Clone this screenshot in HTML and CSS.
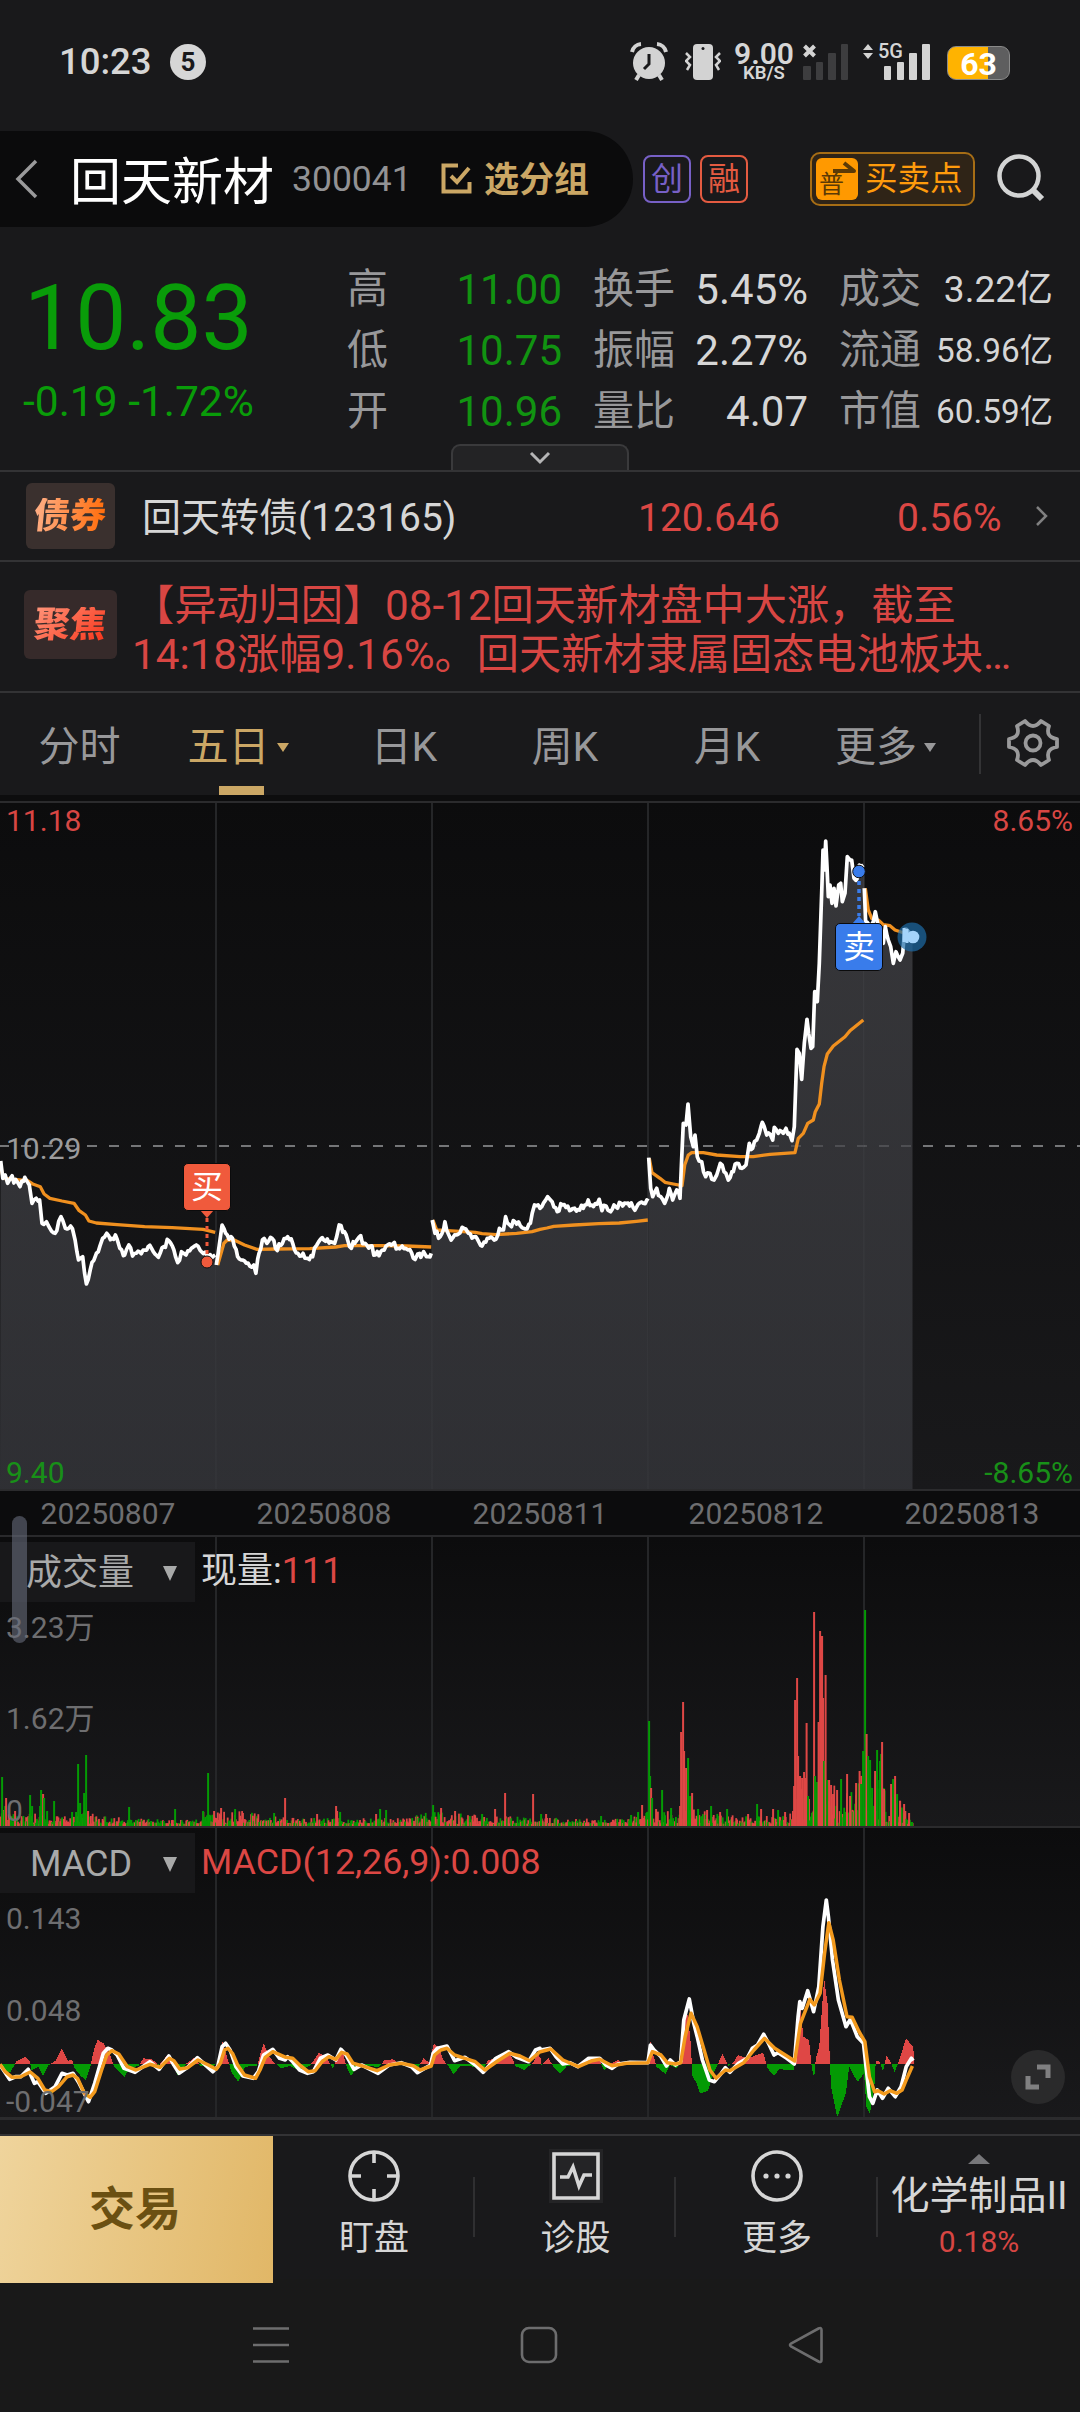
FILE: index.html
```html
<!DOCTYPE html>
<html lang="zh-CN">
<head>
    <meta charset="UTF-8">
    <meta name="viewport" content="width=device-width, initial-scale=1.0">
    <title>回天新材 300041</title>
    <link rel="stylesheet" href="styles.css">
</head>
<body>
    <div class="status-bar">
        <span class="clock">10:23</span>
        <span class="notice">5</span>
        <div class="status-icons">
            <svg class="icon-alarm" width="38" height="40" viewBox="0 0 38 40">
                <circle cx="19" cy="21" r="16"/>
                <path d="M2 10a10 10 0 0 1 9-8M27 2a10 10 0 0 1 9 8" class="thick"/>
                <path d="M9 33l-3 5M29 33l3 5" class="thick"/>
                <path d="M19 12v10l-5 5" class="cut"/>
            </svg>
            <svg class="icon-vibrate" width="36" height="38" viewBox="0 0 36 38">
                <rect x="8" y="1" width="20" height="36" rx="4"/>
                <circle cx="18" cy="5.500" r="1.500" fill="#19191b"/>
                <path d="M1 10l4 4-4 4 4 4-3 5M35 10l-4 4 4 4-4 4 3 5" class="thin"/>
            </svg>
            <div class="speed"><b>9.00</b><small>KB/S</small></div>
            <svg class="icon-signal-off" width="46" height="38" viewBox="0 0 46 38">
                <path d="M1.500 3l10 10M11.500 3l-10 10" class="thick"/>
                <g fill="#3d3d3f"><rect y="23" width="8" height="14" rx="1"/><rect x="13" y="19" width="7" height="18" rx="1"/><rect x="25" y="10" width="8" height="27" rx="1"/><rect x="38" y="1" width="7" height="36" rx="1"/></g>
            </svg>
            <div class="signal">
                <svg width="68" height="38" viewBox="0 0 68 38">
                    <path d="M0 7l5-6 5 6zM0 10l5 6 5-6z"/>
                    <rect x="21" y="23" width="7" height="14" rx="1"/><rect x="34" y="19" width="7" height="18" rx="1"/><rect x="46" y="10" width="8" height="27" rx="1"/><rect x="59" y="1" width="8" height="36" rx="1"/>
                </svg>
                <b>5G</b>
            </div>
            <div class="battery">63</div>
        </div>
    </div>

    <div class="header">
        <div class="title-pill">
            <svg width="24" height="40" viewBox="0 0 24 40"><path d="M22 2L4 20l18 18" fill="none" stroke="#9a9a9b" stroke-width="3.500"/></svg>
            <h1>回天新材</h1>
            <span class="code">300041</span>
            <svg class="icon-check" width="32" height="32" viewBox="0 0 32 32"><path d="M17 2.500H2.500v26h26V19M10 13l6 6L28 5" fill="none" stroke="#cba765" stroke-width="4"/></svg>
            <span class="group">选分组</span>
        </div>
        <span class="tag tag-purple">创</span>
        <span class="tag tag-red">融</span>
        <div class="trade-points">
            <div class="trade-icon">普<svg width="24" height="12" viewBox="0 0 24 12"><path d="M1 10h21L12 2" fill="none" stroke="#5b3a06" stroke-width="4" stroke-linejoin="round"/></svg></div>
            <span>买卖点</span>
        </div>
        <svg class="icon-search" width="50" height="50" viewBox="0 0 50 50"><circle cx="22" cy="22" r="19.500" fill="none" stroke="#d3d4d4" stroke-width="4.500"/><path d="M35 35l10 10" stroke="#d3d4d4" stroke-width="6"/></svg>
    </div>

    <div class="quote">
        <div class="price">
            <div class="last">10.83</div>
            <div class="change">-0.19 -1.72%</div>
        </div>
        <dl class="stats stats-a">
            <dt>高</dt><dd>11.00</dd>
            <dt>低</dt><dd>10.75</dd>
            <dt>开</dt><dd>10.96</dd>
        </dl>
        <dl class="stats stats-b">
            <dt>换手</dt><dd>5.45%</dd>
            <dt>振幅</dt><dd>2.27%</dd>
            <dt>量比</dt><dd>4.07</dd>
        </dl>
        <dl class="stats stats-c">
            <dt>成交</dt><dd class="wide">3.22亿</dd>
            <dt>流通</dt><dd>58.96亿</dd>
            <dt>市值</dt><dd>60.59亿</dd>
        </dl>
        <div class="expand"><svg width="24" height="14" viewBox="0 0 24 14"><path d="M3 2l9 9 9-9" fill="none" stroke="#b5b5b6" stroke-width="3"/></svg></div>
    </div>

    <div class="bond">
        <span class="badge badge-bond"><i>债券</i></span>
        <span class="bond-name">回天转债(123165)</span>
        <span class="bond-price">120.646</span>
        <span class="bond-change">0.56%</span>
        <svg width="14" height="22" viewBox="0 0 14 22"><path d="M2 2l9 9-9 9" fill="none" stroke="#808081" stroke-width="2.500"/></svg>
    </div>

    <div class="focus">
        <span class="badge badge-focus"><i>聚焦</i></span>
        <p>【异动归因】08-12回天新材盘中大涨，截至<br>14:18涨幅9.16%。回天新材隶属固态电池板块…</p>
    </div>

    <div class="tabs">
        <span class="tab">分时</span>
        <span class="tab active">五日<em></em></span>
        <span class="tab">日K</span>
        <span class="tab">周K</span>
        <span class="tab">月K</span>
        <span class="tab more">更多<em></em></span>
        <div class="settings">
            <svg width="52" height="52" viewBox="0 0 52 52" fill="none" stroke="#9a9a9b" stroke-width="3.800" stroke-linejoin="round">
                <path d="M18 4Q26 14 34 4L42 9Q38 20 50 22V30Q38 32 42 43L34 48Q26 38 18 48L10 43Q14 32 2 30V22Q14 20 10 9Z"/>
                <circle cx="26" cy="26" r="7.500"/>
            </svg>
        </div>
    </div>

    <div class="panel price-panel">
        <svg id="price-chart" width="1080" height="690" viewBox="0 0 1080 690"></svg>
        <span class="label red top left">11.18</span>
        <span class="label red top right">8.65%</span>
        <span class="label mid left">10.29</span>
        <span class="label green bottom left">9.40</span>
        <span class="label green bottom right">-8.65%</span>
        <span class="marker buy">买</span>
        <span class="marker sell">卖</span>
    </div>

    <div class="dates">
        <span>20250807</span><span>20250808</span><span>20250811</span><span>20250812</span><span>20250813</span>
    </div>

    <div class="panel volume-panel">
        <svg id="volume-chart" width="1080" height="291" viewBox="0 0 1080 291"></svg>
        <div class="panel-head">
            <div class="select"><span>成交量</span><em></em></div>
            <div class="reading">现量:<span class="red">111</span></div>
        </div>
        <span class="label v1 left">3.23万</span>
        <span class="label v2 left">1.62万</span>
        <span class="label v3 left">0</span>
    </div>

    <div class="panel macd-panel">
        <svg id="macd-chart" width="1080" height="292" viewBox="0 0 1080 292"></svg>
        <div class="panel-head">
            <div class="select"><span>MACD</span><em></em></div>
            <div class="reading red">MACD(12,26,9):0.008</div>
        </div>
        <span class="label m1 left">0.143</span>
        <span class="label m2 left">0.048</span>
        <span class="label m3 left">-0.047</span>
        <div class="zoom-btn"><svg width="26" height="26" viewBox="0 0 26 26"><path d="M12 3h11v11M3 12v11h11" fill="none" stroke="#808081" stroke-width="5"/></svg></div>
    </div>

    <div class="side-handle"></div>

    <div class="toolbar">
        <div class="trade">交易</div>
        <div class="tool">
            <svg width="54" height="54" viewBox="0 0 54 54" fill="none" stroke="#d6d6d6" stroke-width="3.600"><circle cx="27" cy="27" r="24"/><path d="M27 3v11M27 40v11M3 27h11M40 27h11"/></svg>
            <span>盯盘</span>
        </div>
        <div class="tool">
            <svg width="54" height="54" viewBox="0 0 54 54" fill="none" stroke="#d6d6d6" stroke-width="3.600"><path d="M0 0h54v54H0z" fill="#242426" stroke="none"/><path d="M5 5h44v44H5z"/><path d="M11 28h8l5-10 6 19 5-11h8"/></svg>
            <span>诊股</span>
        </div>
        <div class="tool">
            <svg width="54" height="54" viewBox="0 0 54 54" fill="none" stroke="#d6d6d6" stroke-width="3.600"><circle cx="27" cy="27" r="24"/><g fill="#d6d6d6" stroke="none"><circle cx="16" cy="27" r="2.600"/><circle cx="27" cy="27" r="2.600"/><circle cx="38" cy="27" r="2.600"/></g></svg>
            <span>更多</span>
        </div>
        <div class="sector">
            <em></em>
            <span>化学制品II</span>
            <b>0.18%</b>
        </div>
    </div>

    <div class="sys-nav">
        <svg width="38" height="38" viewBox="0 0 38 38"><path d="M1 2.500h36M1 19h36M1 35.500h36"/></svg>
        <svg width="38" height="38" viewBox="0 0 38 38"><rect x="2" y="2" width="34" height="34" rx="7"/></svg>
        <svg width="38" height="38" viewBox="0 0 38 38"><path d="M33.500 4v30q0 3-3 1.500L3 20.500q-2-1.500 0-3L30.500 2.500q3-1.500 3 1.500z"/></svg>
    </div>

    <script src="script.js"></script>
</body>
</html>
```

FILE: styles.css
```css
* {
    margin: 0;
    padding: 0;
    box-sizing: border-box;
}

body {
    position: relative;
    width: 1080px;
    height: 2412px;
    overflow: hidden;
    font-family: Roboto, 'Noto Sans CJK SC', sans-serif;
    background-color: #19191b;
    color: #d6d6d6;
    line-height: 1;
}

svg {
    display: block;
    flex: none;
}

i, em {
    font-style: normal;
}

.red {
    color: #dc4744;
}

/* status bar */
.status-bar {
    display: flex;
    align-items: center;
    height: 124px;
    padding-left: 59px;
}

.clock {
    width: 111px;
    font-size: 36.5px;
    font-weight: 500;
}

.notice {
    width: 36px;
    height: 36px;
    border-radius: 50%;
    background-color: #d6d6d6;
    color: #19191b;
    font-size: 26px;
    font-weight: 700;
    line-height: 37px;
    text-align: center;
}

.status-icons {
    display: flex;
    align-items: center;
    margin-left: 424px;
    fill: #d3d3d3;
}

.status-icons .thick,
.status-icons .thin,
.status-icons .cut {
    fill: none;
    stroke: #d3d3d3;
    stroke-width: 4;
}

.status-icons .thin {
    stroke-width: 2.5px;
}

.status-icons .cut {
    stroke: #19191b;
    stroke-width: 3px;
}

.icon-vibrate {
    margin-left: 17px;
}

.speed {
    display: flex;
    flex-direction: column;
    align-items: center;
    width: 60px;
    margin-left: 13px;
}

.speed b {
    font-size: 30px;
    line-height: 22px;
    font-weight: 600;
}

.speed small {
    font-size: 18.5px;
    line-height: 17px;
    font-weight: 600;
}

.icon-signal-off {
    margin-left: 9px;
}

.signal {
    position: relative;
    margin-left: 14px;
}

.signal b {
    position: absolute;
    left: 15px;
    top: 0;
    font-size: 20px;
    line-height: 17px;
    font-weight: 500;
}

.battery {
    width: 63px;
    height: 34px;
    margin: 2px 0 0 16px;
    border: 1px solid #8a8a8a;
    border-radius: 9px;
    background: linear-gradient(90deg, #ffb300 66%, #5e5e5f 66%);
    color: #fff;
    font-size: 32px;
    font-weight: 700;
    line-height: 34px;
    text-align: center;
}

/* header */
.header {
    display: flex;
    align-items: center;
    height: 110px;
}

.title-pill {
    display: flex;
    align-items: center;
    width: 633px;
    height: 96px;
    margin-right: 10px;
    padding-left: 14px;
    border-radius: 0 48px 48px 0;
    background-color: #0b0b0c;
}

.title-pill h1 {
    width: 222px;
    margin-left: 32px;
    padding-top: 6px;
    font-size: 51px;
    font-weight: 400;
    color: #fff;
}

.code {
    width: 149px;
    padding-top: 2px;
    font-size: 35.5px;
    color: #929294;
}

.group {
    margin-left: 11px;
    padding-top: 3px;
    font-size: 35px;
    font-weight: 700;
    color: #cba765;
}

.tag {
    width: 48px;
    height: 48px;
    margin-right: 9px;
    border: 2px solid;
    border-radius: 8px;
    font-size: 32px;
    line-height: 44px;
    text-align: center;
}

.tag-purple {
    color: #7760c6;
}

.tag-red {
    color: #e45b41;
}

.trade-points {
    display: flex;
    align-items: center;
    width: 165px;
    height: 54px;
    margin-left: 53px;
    padding-left: 4px;
    border: 2px solid #a66d15;
    border-radius: 10px;
    background-color: #2f2417;
    color: #ff9b0c;
    font-size: 32.5px;
}

.trade-icon {
    position: relative;
    width: 42px;
    height: 42px;
    margin-right: 7px;
    padding: 15px 0 0 3px;
    border-radius: 6px;
    background-color: #ff9900;
    color: #5b3a06;
    font-size: 25px;
    line-height: 24px;
}

.trade-icon svg {
    position: absolute;
    right: 2px;
    top: 3px;
}

.icon-search {
    margin-left: 22px;
}

/* quote */
.quote {
    position: relative;
    display: flex;
    height: 238px;
    padding-top: 25px;
    border-bottom: 2px solid #333335;
}

.price {
    width: 347px;
    color: #099c09;
}

.last {
    padding: 14px 0 0 24px;
    font-size: 91px;
    line-height: 90px;
}

.change {
    margin-top: 15px;
    padding-left: 23px;
    font-size: 42.5px;
    line-height: 48px;
    white-space: nowrap;
}

.stats {
    display: grid;
    grid-template-columns: auto auto;
    grid-auto-rows: 61px;
    justify-content: space-between;
    align-content: start;
    line-height: 61px;
    white-space: nowrap;
}

.stats dt {
    font-size: 41px;
    color: #98989a;
}

.stats dd {
    font-size: 42px;
    text-align: right;
}

.stats-a {
    width: 215px;
}

.stats-a dd {
    color: #119311;
}

.stats-b {
    width: 215px;
    margin-left: 31px;
}

.stats-c {
    width: 214px;
    margin-left: 31px;
}

.stats-c dd {
    font-size: 33.3px;
}

.stats-c dd.wide {
    font-size: 37px;
}

.expand {
    position: absolute;
    left: 451px;
    bottom: 0;
    display: flex;
    align-items: center;
    justify-content: center;
    width: 178px;
    height: 26px;
    border: 2px solid #3a3a3c;
    border-bottom: 0;
    border-radius: 9px 9px 0 0;
    background-color: #232325;
}

/* bond and focus rows */
.badge {
    display: flex;
    align-items: center;
    justify-content: center;
    flex: none;
    border-radius: 6px;
}

.badge i {
    font-size: 36px;
    font-weight: 900;
    transform: skewX(-6deg);
    background-clip: text;
    -webkit-background-clip: text;
    color: transparent;
}

.badge-bond {
    width: 89px;
    height: 66px;
    background-color: #3a302e;
}

.badge-bond i {
    background-image: linear-gradient(90deg, #ffae85, #ff6c0a);
}

.badge-focus {
    width: 93px;
    height: 69px;
    margin-top: 28px;
    background-color: #362a2a;
}

.badge-focus i {
    background-image: linear-gradient(135deg, #ff9479, #f8341a);
}

.bond {
    display: flex;
    align-items: center;
    height: 90px;
    padding-left: 26px;
    border-bottom: 2px solid #333335;
    font-size: 39px;
}

.bond > span:not(.badge) {
    padding-top: 5px;
}

.bond-name {
    width: 496px;
    margin-left: 27px;
}

.bond-price {
    width: 259px;
    color: #dc4744;
}

.bond-change {
    width: 138px;
    color: #dc4744;
}

.focus {
    display: flex;
    height: 131px;
    padding-left: 24px;
    border-bottom: 2px solid #333335;
}

.focus p {
    margin: 20px 0 0 15px;
    font-size: 42.2px;
    line-height: 48.7px;
    white-space: nowrap;
    color: #d84643;
}

/* tabs */
.tabs {
    display: grid;
    grid-template-columns: 159px 158px 174px 148px 176px 164px 101px;
    height: 108px;
    border-bottom: 6px solid #0d0d0e;
}

.tab {
    position: relative;
    display: flex;
    align-items: center;
    justify-content: center;
    padding-top: 6px;
    font-size: 41px;
    color: #98989a;
}

.tab em {
    margin-left: 7px;
    border: 6px solid transparent;
    border-top: 9px solid #98989a;
    border-bottom: 0;
}

.tab.active {
    color: #cba765;
}

.tab.active em {
    border-top-color: #cba765;
}

.tab.active::after {
    content: '';
    position: absolute;
    left: 60px;
    bottom: 0;
    width: 45px;
    height: 9px;
    background-color: #cba765;
}

.tab.more {
    padding-right: 23px;
}

.settings {
    height: 60px;
    margin-top: 21px;
    padding: 3px 0 0 26px;
    border-left: 2px solid #333335;
}

/* chart panels */
.panel {
    position: relative;
}

.price-panel {
    height: 690px;
}

.label {
    position: absolute;
    font-size: 30px;
    line-height: 36px;
    color: #6e6e70;
}

.label.left {
    left: 6px;
}

.label.right {
    right: 7px;
}

.label.red {
    color: #d84643;
}

.label.green {
    color: #189018;
}

.label.top {
    top: 2px;
}

.label.mid {
    top: 330px;
    color: #9b9b9c;
}

.label.bottom {
    bottom: 0;
}

.marker {
    position: absolute;
    width: 48px;
    height: 48px;
    border: 1px solid #0b0b0c;
    border-radius: 5px;
    color: #fff;
    font-size: 32px;
    line-height: 46px;
    text-align: center;
}

.marker.buy {
    left: 183px;
    top: 362px;
    background-color: #f05a3c;
}

.marker.sell {
    left: 835px;
    top: 122px;
    background-color: #397ceb;
}

.dates {
    display: grid;
    grid-template-columns: repeat(5, 216px);
    height: 46px;
    border-bottom: 2px solid #29292b;
    background-color: #0c0c0d;
    color: #6e6e70;
    font-size: 30px;
    line-height: 46px;
    text-align: center;
}

.volume-panel {
    height: 291px;
}

.macd-panel {
    height: 292px;
}

.panel-head {
    position: absolute;
    left: 0;
    top: 5px;
    display: flex;
    gap: 6px;
    height: 60px;
    font-size: 36px;
    line-height: 60px;
}

.reading {
    line-height: 59px;
}

.select {
    display: flex;
    align-items: center;
    justify-content: space-between;
    width: 195px;
    padding: 2px 18px 0 26px;
    background-color: #18181a;
    color: #a8a9a9;
}

.macd-panel .select {
    padding-left: 30px;
}

.macd-panel .reading {
    font-size: 35.8px;
    line-height: 58px;
}

.select em {
    border: 7.5px solid transparent;
    border-top: 15px solid #a8a9a9;
    border-bottom: 0;
}

.label.v1 {
    top: 73px;
}

.label.v2 {
    top: 164px;
}

.label.v3 {
    top: 256px;
}

.label.m1 {
    top: 73px;
}

.label.m2 {
    top: 165px;
}

.label.m3 {
    top: 256px;
}

.zoom-btn {
    position: absolute;
    left: 1011px;
    top: 222px;
    display: flex;
    align-items: center;
    justify-content: center;
    width: 54px;
    height: 54px;
    border-radius: 50%;
    background-color: #2a2a2b;
}

.side-handle {
    position: absolute;
    left: 12px;
    top: 1516px;
    width: 15px;
    height: 127px;
    border-radius: 8px;
    background-color: rgba(104, 108, 124, 0.6);
}

/* bottom toolbar */
.toolbar {
    display: grid;
    grid-template-columns: 273px 202px 201px 202px 202px;
    height: 145px;
    margin-top: 14px;
    border-top: 2px solid #333335;
}

.trade {
    padding-right: 3px;
    background: linear-gradient(100deg, #efd49c, #e1b767);
    color: #6b5012;
    font-size: 46px;
    font-weight: 700;
    line-height: 147px;
    text-align: center;
}

.tool,
.sector {
    position: relative;
    display: flex;
    flex-direction: column;
    align-items: center;
}

.tool {
    padding-top: 13px;
    font-size: 35px;
}

.tool span {
    margin-top: 16px;
    line-height: 40px;
}

.tool::after {
    content: '';
    position: absolute;
    right: 0;
    top: 41px;
    width: 2px;
    height: 60px;
    background-color: #2f2f31;
}

.sector em {
    margin-top: 18px;
    border: 11px solid transparent;
    border-bottom: 10px solid #77777a;
    border-top: 0;
}

.sector span {
    margin-top: 10px;
    font-size: 39px;
    line-height: 44px;
    white-space: nowrap;
}

.sector b {
    margin-top: 6px;
    font-size: 30px;
    line-height: 36px;
    font-weight: 400;
    color: #d84643;
}

.sys-nav {
    display: flex;
    gap: 230px;
    height: 132px;
    padding: 47px 0 0 252px;
    background-color: #191919;
    fill: none;
    stroke: #6d6d6e;
    stroke-width: 2.6px;
}
```

FILE: script.js
```javascript
const NS = 'http://www.w3.org/2000/svg';
const RED = '#df4745';
const GREEN = '#049a04';

function add(parent, tag, attrs) {
    const el = document.createElementNS(NS, tag);
    for (const key in attrs) el.setAttribute(key, attrs[key]);
    parent.appendChild(el);
    return el;
}

// fixed-seed random so every redraw gives the same ticks
let seed = 7;
function rnd() {
    seed = (seed * 16807) % 2147483647;
    return seed / 2147483647;
}

// "x,y x,y" -> [[x, y], ...] in panel pixels
function parse(str, ox, oy, sx, sy) {
    return str.trim().split(/\s+/).map(p => {
        const [x, y] = p.split(',').map(Number);
        return [ox + x * sx, oy + y * sy];
    });
}

function at(pts, x) {
    for (let i = 1; i < pts.length; i++) {
        if (x <= pts[i][0]) {
            const [x0, y0] = pts[i - 1], [x1, y1] = pts[i];
            return y0 + (y1 - y0) * (x - x0) / (x1 - x0 || 1);
        }
    }
    return pts[pts.length - 1][1];
}

function toPath(pts) {
    return 'M' + pts.map(p => p[0].toFixed(1) + ' ' + p[1].toFixed(1)).join('L');
}

// add small price ticks between the key points
function ticks(pts, amp) {
    const out = [pts[0]];
    for (let i = 1; i < pts.length; i++) {
        const [x0, y0] = pts[i - 1], [x1, y1] = pts[i];
        for (let x = x0 + 1.8; x < x1 - 1; x += 1.8) {
            out.push([x, y0 + (y1 - y0) * (x - x0) / (x1 - x0) + (rnd() - 0.5) * amp]);
        }
        out.push(pts[i]);
    }
    return out;
}

function frame(svg, h, id) {
    const defs = add(svg, 'defs', {});
    const g = add(defs, 'linearGradient', { id: id, x1: 0, y1: 0, x2: 0, y2: 1 });
    add(g, 'stop', { offset: 0, 'stop-color': '#0c0c0d' });
    add(g, 'stop', { offset: 1, 'stop-color': '#19191b' });
    add(svg, 'rect', { width: 1080, height: h, fill: `url(#${id})` });
    for (const x of [216, 432, 648, 864]) {
        add(svg, 'path', { d: `M${x} 0V${h}`, stroke: '#252628', 'stroke-width': 2 });
    }
    return defs;
}

const K = 540 / 1568, T = 1 / 3;

/* ---- price ---- */
const days = [
    parse('2,123 8,175 15,165 22,190 30,175 50,185 58,200 72,172 85,195 93,250 105,235 115,240 122,310 135,305 145,325 160,340 177,290 190,325 205,318 218,360 228,420 240,410 251,492 262,450 280,400 298,355 310,340 325,355 335,345 348,385 362,405 374,375 385,408 405,395 430,380 445,395 460,412 475,380 490,362 505,390 516,428 527,395 540,405 570,375 585,395 600,405 625,405', 0, 319, K, T),
    parse('628,435 645,315 660,345 675,355 690,410 700,420 715,430 737,435 743,460 752,400 762,360 775,370 790,355 800,385 820,370 835,350 850,370 865,400 880,400 893,415 908,410 920,375 940,360 960,365 972,370 985,315 1000,335 1015,380 1030,370 1042,352 1060,370 1075,378 1090,405 1110,390 1140,372 1155,385 1168,378 1185,390 1200,415 1213,402 1222,412 1230,395 1238,410 1252,400', 0, 319, K, T),
    parse('1255,300 1263,340 1278,350 1292,305 1310,360 1325,345 1342,322 1360,340 1385,355 1400,378 1415,355 1435,360 1450,325 1462,330 1468,290 1480,315 1495,305 1520,325 1540,310 1552,255 1568,265 1590,230 1603,245 1618,275 1633,255 1658,270 1683,270 1698,255 1708,240 1718,255 1740,238 1748,272 1760,258 1773,275 1783,255 1808,258 1828,258 1848,262 1868,250 1883,243', 0, 319, K, T),
    parse('326,1073 332,1165 338,1190 350,1165 362,1190 374,1210 388,1165 398,1200 410,1170 420,1195 430,970 438,975 444,912 452,1010 460,1040 465,1005 472,1070 485,1085 497,1130 510,1120 522,1140 530,1125 541,1090 552,1115 565,1140 580,1115 590,1090 605,1105 618,1095 628,1030 638,1045 650,1020 658,1000 667,967 680,1005 698,1020 703,982 715,1000 730,1000 738,985 748,1000 756,1022 763,980 771,748 778,760 785,838 793,730 801,658 806,700 813,745 818,740 824,575 832,605 838,490 846,250 849,150 853,210 857,123 861,200 865,290 870,255 876,310 882,265 888,318 896,255 902,250 907,305 915,280 922,170 930,180 935,180 942,235 952,235 958,195 970,195', 540, -1, T, T),
    parse('973,265 977,370 1000,365 1006,335 1012,365 1022,400 1030,430 1036,380 1045,420 1052,440 1060,490 1068,455 1080,480 1088,460 1094,388 1105,395 1117,411', 540, -1, T, T)
];

const averages = [
    parse('2,140 10,175 40,178 80,182 95,192 117,200 128,222 145,235 180,243 215,250 230,272 248,285 258,303 280,309 340,314 420,320 500,323 590,328 625,337', 0, 319, K, T),
    parse('632,435 650,370 660,360 680,360 710,375 745,388 800,387 900,386 975,381 1000,377 1100,377 1180,378 1252,381', 0, 319, K, T),
    parse('1257,300 1268,330 1300,332 1380,337 1400,341 1440,344 1500,340 1545,335 1568,328 1588,324 1608,319 1668,315 1738,311 1798,309 1848,304 1881,300', 0, 319, K, T),
    parse('328,1075 336,1118 360,1135 375,1147 400,1152 426,1157 434,1095 445,1065 455,1058 490,1058 530,1065 600,1070 640,1070 690,1063 765,1058 775,1015 790,1000 803,970 820,960 826,935 838,912 845,850 852,800 862,762 880,738 915,710 930,692 970,660', 540, -1, T, T),
    parse('976,265 985,330 995,355 1015,360 1030,374 1050,377 1065,390 1090,398', 540, -1, T, T)
];

function drawPrice() {
    const svg = document.getElementById('price-chart');
    const defs = frame(svg, 690, 'bg-price');
    const g = add(defs, 'linearGradient', { id: 'area', x1: 0, y1: 0, x2: 0, y2: 690, gradientUnits: 'userSpaceOnUse' });
    add(g, 'stop', { offset: 0, 'stop-color': '#47474b' });
    add(g, 'stop', { offset: 1, 'stop-color': '#37383d' });
    add(svg, 'path', { d: 'M-1 345H1080', stroke: '#757678', 'stroke-width': 2, 'stroke-dasharray': '10 12' });

    const lines = days.map(d => ticks(d, 7));
    let area = '';
    lines.forEach((l, i) => {
        const end = i < 4 ? (i + 1) * 216 : 912.5;
        area += `M${i * 216} 689L${toPath(l).slice(1)}L${end} ${l[l.length - 1][1]}V689Z`;
    });
    add(svg, 'path', { d: area, fill: 'url(#area)', 'fill-opacity': 0.72 });
    averages.forEach(a => add(svg, 'path', { d: toPath(a), fill: 'none', stroke: '#f0901f', 'stroke-width': 3.3, 'stroke-linejoin': 'round' }));
    lines.forEach(l => add(svg, 'path', { d: toPath(l), fill: 'none', stroke: '#fff', 'stroke-width': 3.7, 'stroke-linejoin': 'round' }));
    add(svg, 'path', { d: 'M0 1H1080M0 689H1080', stroke: '#2b2b2d', 'stroke-width': 2 });

    // buy / sell pointers
    add(svg, 'path', { d: 'M207 417V456', stroke: '#f05a3c', 'stroke-width': 3, 'stroke-dasharray': '4 4' });
    add(svg, 'path', { d: 'M200 409h14l-7 8z', fill: '#f05a3c' });
    add(svg, 'circle', { cx: 207, cy: 461, r: 6, fill: '#f05a3c', stroke: '#111', 'stroke-width': 1 });
    add(svg, 'path', { d: 'M859 80V115', stroke: '#397ceb', 'stroke-width': 3.5, 'stroke-dasharray': '4 4' });
    add(svg, 'path', { d: 'M852 123l7-8 7 8z', fill: '#397ceb' });
    add(svg, 'circle', { cx: 859, cy: 70.5, r: 6.3, fill: '#397ceb', stroke: '#111', 'stroke-width': 1 });
    add(svg, 'circle', { cx: 912, cy: 136, r: 14.5, fill: '#1d6ba6', 'fill-opacity': 0.7 });
    add(svg, 'path', { d: 'M904 127v14M907 128v14', stroke: '#a4d3fa', 'stroke-width': 3 });
    add(svg, 'circle', { cx: 913, cy: 136, r: 6.3, fill: '#a4d3fa' });
}

/* ---- volume ---- */
// x:height:colour
const spikes = '2:49:g 5:20:g 6:28:r 15:15:r 30:31:g 32:20:g 40:20:g 41:36:g 43:32:r 44:28:g 47:15:g 54:25:g 72:14:g 76:14:g 78:62:g 80:23:g 81:12:g 83:12:g 84:33:g 86:71:g 87:12:g 88:15:r 129:19:g 151:5:g 175:17:g 203:15:g 208:53:g 214:15:r 221:18:r 235:17:g 274:13:g 285:28:r 317:12:r 336:20:r 337:15:r 340:14:g 376:12:r 380:17:g 386:16:g 433:21:g 441:18:r 455:15:r 482:12:g 495:17:r 505:33:r 533:32:r 541:12:g 546:12:r 601:10:g 631:11:g 638:14:g 642:21:r 649:105:g 650:50:g 651:38:r 652:28:g 656:17:r 662:36:g 671:18:g 680:20:r 681:94:r 683:124:r 684:75:r 686:58:r 688:68:g 690:30:g 692:33:r 698:17:g 707:16:r 711:20:g 720:14:r 727:17:g 748:12:r 757:22:g 761:17:r 773:17:r 778:16:g 785:14:r 794:40:r 795:126:r 797:148:r 798:70:r 799:50:r 800:50:r 802:48:r 804:54:r 805:48:r 806.500:103:r 808:30:g 814:214:r 815:50:g 817:44:g 818.500:104:r 820:195:r 821:190:r 822:190:r 823:128:r 824:65:g 825.500:151:r 827:46:g 829:46:r 831:41:r 833:32:r 837:36:r 841:47:g 847:52:r 850:30:r 856:43:r 859.500:55:r 861:42:g 863:75:g 865:216:g 866.500:92:r 868:70:g 870:66:g 872:38:g 875:55:r 877:76:g 880:65:g 881:72:g 882:84:r 884:37:r 891:42:r 893:47:g 895:50:r 897:32:g 900:25:r 904:22:r 909:13:r 912:4:g';
// typical bar height along the x axis
const level = '0,15 12,11 28,11 45,11 60,8 76,12 90,13 100,8 128,6 170,5 195,5 204,14 240,14 262,9 300,6 360,6 400,6 425,12 445,12 500,8 530,7 560,6 630,5 640,15 660,12 690,19 710,11 740,8 780,9 793,14 800,38 812,32 830,40 850,32 862,55 880,46 893,34 905,14 913,2';

function drawVolume() {
    const svg = document.getElementById('volume-chart');
    frame(svg, 291, 'bg-vol');
    const base = 289;
    const env = parse(level, 0, 0, 1, 1);
    for (let x = 0; x < 912; x += 0.9) {
        const h = 2 + at(env, x) * rnd() * (rnd() > 0.4 ? 1 : 0.4);
        const hot = x > 793 && x < 830;
        const red = rnd() > (hot ? 0.45 : x > 830 ? 0.65 : 0.45);
        add(svg, 'rect', { x: x, y: base - h, width: 1.8, height: h, fill: red ? RED : GREEN });
    }
    spikes.split(' ').forEach(s => {
        const [x, h, c] = s.split(':');
        add(svg, 'rect', { x: x - 0.9, y: base - h, width: 2, height: h, fill: c === 'r' ? RED : GREEN });
    });
    add(svg, 'path', { d: 'M0 290H1080', stroke: '#2b2b2d', 'stroke-width': 2 });
}

/* ---- MACD ---- */
const difA = '0,735 28,778 45,770 60,770 82,748 100,790 110,785 133,820 160,800 180,760 195,765 212,760 230,790 257,845 275,790 300,700 313,685 325,690 340,705 360,745 392,757 435,725 462,748 490,708 505,735 520,760 545,742 573,713 600,738 618,755 632,740 645,680 655,670 668,690 685,740 705,768 735,775 750,755 765,705 792,688 812,715 828,720 835,710 850,725 870,750 893,760 910,755 930,715 952,705 975,720 990,688 1005,705 1028,748 1050,735 1098,760 1130,735 1165,728 1195,740 1212,758 1250,735 1258,700 1270,685 1298,678 1320,722 1350,712 1380,735 1403,757 1440,715 1477,695 1500,712 1535,725 1555,690 1568,685';
const difB = '0,690 28,685 45,710 65,732 85,728 108,740 140,715 172,715 190,735 208,745 225,732 260,727 312,728 319,675 330,690 350,710 366,738 377,720 392,735 407,725 416,600 432,537 445,610 455,650 470,720 490,780 505,785 525,760 537,743 550,757 575,730 600,715 615,685 630,675 648,643 662,670 678,705 690,698 715,715 737,732 748,590 753,545 760,565 776,512 793,575 808,500 820,320 830,240 836,290 848,420 865,540 887,620 900,598 920,650 938,670 943,720 955,830 965,850 978,810 993,835 1010,805 1030,830 1047,800 1062,740 1077,715 1082,722';
const deaA = '0,733 15,755 35,772 60,770 88,756 110,775 130,810 150,815 170,800 195,770 212,765 225,775 245,820 262,832 275,815 295,750 310,705 325,692 345,702 370,740 395,750 435,733 465,742 492,715 505,722 522,747 545,743 575,720 605,735 628,748 640,730 652,690 662,685 675,700 690,735 710,765 742,775 755,750 770,712 792,695 830,712 850,715 870,735 895,755 915,752 935,725 955,710 975,718 992,697 1008,702 1025,730 1050,737 1095,752 1130,735 1165,730 1200,737 1220,750 1252,738 1262,705 1280,690 1298,685 1320,705 1350,715 1380,725 1408,750 1445,723 1480,700 1510,708 1538,722 1568,695';
const deaB = '0,695 30,687 65,720 110,740 150,722 172,718 208,737 250,730 312,728 325,695 350,705 368,728 392,732 407,728 420,650 437,580 455,620 475,690 492,750 510,775 537,750 550,752 590,728 620,690 650,655 680,685 738,723 755,610 782,538 795,555 812,520 825,400 837,308 850,360 868,480 890,590 905,592 925,635 942,665 955,770 970,815 980,812 998,822 1015,812 1035,820 1050,810 1062,780 1080,738';
const barA = '0,732 10,755 30,755 45,725 72,710 85,725 90,750 110,740 123,768 140,735 160,722 178,685 195,722 208,720 215,745 235,770 248,780 262,735 272,685 282,660 300,670 320,710 330,740 360,770 375,745 400,738 415,715 440,718 460,735 485,705 500,730 515,768 540,730 565,712 580,738 610,742 632,728 645,665 660,720 672,760 690,785 710,740 745,738 755,700 764,670 780,710 795,728 815,745 840,738 870,752 900,735 925,698 945,710 965,745 975,720 992,690 1005,740 1018,768 1035,738 1100,740 1115,720 1140,718 1165,735 1210,748 1228,715 1245,728 1258,672 1272,680 1285,718 1305,745 1315,763 1335,738 1380,740 1400,750 1415,722 1445,712 1480,700 1495,738 1520,750 1545,730 1560,700 1568,715';
const barB = '0,735 22,715 35,738 55,762 75,738 120,730 140,712 172,725 183,752 195,735 225,720 240,732 312,730 317,662 325,700 335,740 362,762 375,735 395,745 408,700 416,590 426,585 434,660 440,770 452,790 462,820 485,812 500,760 512,735 527,702 545,738 560,725 572,705 600,715 645,698 658,745 677,768 690,748 735,750 742,600 753,565 762,650 778,660 786,740 793,775 798,715 808,680 822,475 832,550 838,700 842,800 860,892 885,820 895,740 910,770 920,785 938,760 945,860 955,880 968,800 972,725 982,722 993,755 1003,708 1015,725 1027,757 1040,720 1060,655 1080,680 1086,732';

function series(a, b) {
    return parse(a, 0, -8, K, T).concat(parse(b, 540.5, -8, K, T));
}

function drawMacd() {
    const svg = document.getElementById('macd-chart');
    frame(svg, 292, 'bg-macd');
    const zero = 236;
    const bars = series(barA, barB);
    for (let x = 0; x < 914; x++) {
        const y = Math.round(at(bars, x));
        if (y === zero) continue;
        add(svg, 'rect', {
            x: x, y: Math.min(y, zero), width: 1.05, height: Math.abs(y - zero),
            fill: y < zero ? RED : GREEN
        });
    }
    add(svg, 'path', { d: toPath(series(difA, difB)), fill: 'none', stroke: '#fff', 'stroke-width': 3.7, 'stroke-linejoin': 'round' });
    add(svg, 'path', { d: toPath(series(deaA, deaB)), fill: 'none', stroke: '#f39a1d', 'stroke-width': 3.5, 'stroke-linejoin': 'round' });
    add(svg, 'path', { d: 'M0 290.500H1080', stroke: '#2b2b2d', 'stroke-width': 3 });
}

drawPrice();
drawVolume();
drawMacd();
```
